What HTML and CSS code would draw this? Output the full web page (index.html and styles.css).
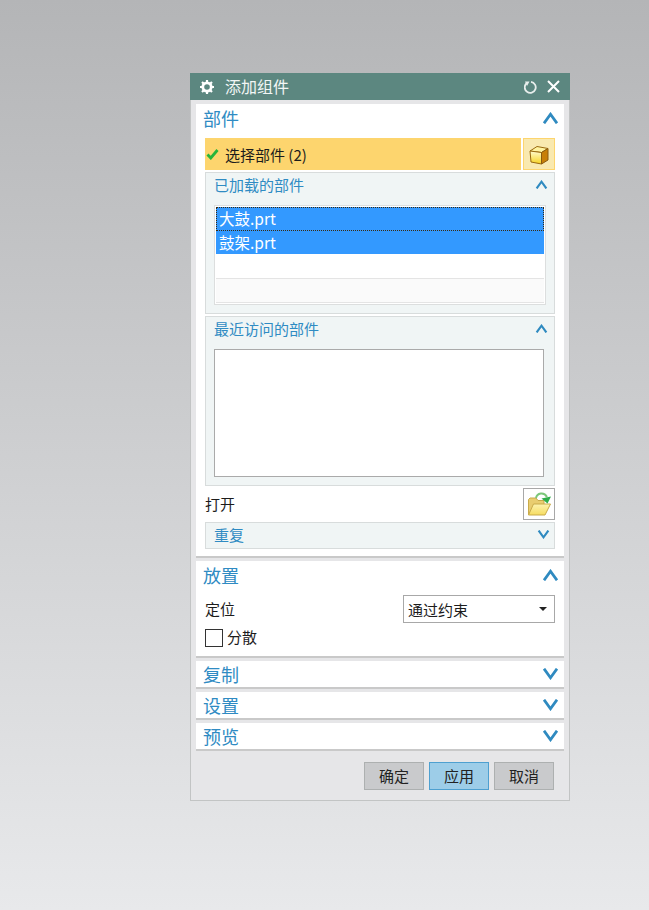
FILE: index.html
```html
<!DOCTYPE html>
<html lang="zh">
<head>
<meta charset="utf-8">
<title>添加组件</title>
<link rel="stylesheet" href="styles.css">
</head>
<body>
<svg width="0" height="0" class="defs">
  <symbol id="up" viewBox="0 0 15 12"><path d="M1 11.300 7.500 2.300 14 11.300" fill="none" stroke="currentColor" stroke-width="2.800"/></symbol>
  <symbol id="down" viewBox="0 0 15 12"><path d="M1 .7 7.500 9.700 14 .7" fill="none" stroke="currentColor" stroke-width="2.800"/></symbol>
</svg>
<main class="dialog">
  <header class="titlebar">
    <svg class="gear" width="16" height="16" viewBox="0 0 16 16"><circle cx="8" cy="8" r="4.200" fill="none" stroke="#fff" stroke-width="2.800"/><path d="M8 1v2.500M8 12.500V15M1 8h2.500M12.500 8H15M3 3l1.800 1.800M11.200 11.200 13 13M3 13l1.800-1.800M11.200 4.800 13 3" stroke="#fff" stroke-width="2.200"/></svg>
    <span class="dialog-title">添加组件</span>
    <svg class="reset" width="14" height="14" viewBox="0 0 14 14"><path d="M2.600 3.200A5.500 5.500 0 1 0 7 1.900" fill="none" stroke="#e8eeec" stroke-width="1.800"/><path d="M1 1.500 5.500 1.500 3 6z" fill="#e8eeec"/></svg>
    <svg class="close" width="13" height="13" viewBox="0 0 13 13"><path d="M1 1 12 12M12 1 1 12" stroke="#fff" stroke-width="2"/></svg>
  </header>
  <div class="body">
    <section class="section first">
      <div class="section-head"><h2>部件</h2><svg class="chev"><use href="#up"/></svg></div>
      <div class="select-row">
        <div class="select-bar">
          <svg class="check" width="13" height="12" viewBox="0 0 13 12"><path d="M1.500 6.500 4.800 10 11.500 2" fill="none" stroke="#27b53a" stroke-width="2.800"/></svg>
          <span>选择部件 (2)</span>
        </div>
        <button class="icon-btn yellow" type="button">
          <svg class="cube" width="20" height="20" viewBox="0 0 20 20">
            <defs><linearGradient id="cubeF" x1="0" y1="0" x2="0" y2="1"><stop offset="0" stop-color="#fffbd0"/><stop offset="1" stop-color="#f7d21e"/></linearGradient></defs>
            <path d="M1 6 8 1.500 19 3.500 12.500 7.500z" fill="#fff3a0" stroke="#9a6a10"/>
            <path d="M1 6 12.500 7.500V19L2 17z" fill="url(#cubeF)" stroke="#9a6a10"/>
            <path d="M12.500 7.500 19 3.500V15L12.500 19z" fill="#c87f08" stroke="#8a5a10"/>
          </svg>
        </button>
      </div>
      <div class="subpanel loaded">
        <div class="sub-head"><h3>已加载的部件</h3><svg class="chev small"><use href="#up"/></svg></div>
        <div class="loaded-list">
          <div class="item focused">大鼓.prt</div>
          <div class="item">鼓架.prt</div>
          <div class="blank"></div>
          <div class="blank grey"></div>
        </div>
      </div>
      <div class="subpanel recent">
        <div class="sub-head"><h3>最近访问的部件</h3><svg class="chev small"><use href="#up"/></svg></div>
        <div class="recent-list"></div>
      </div>
      <div class="open-row">
        <span>打开</span>
        <button class="icon-btn plain" type="button">
          <svg width="26" height="26" viewBox="0 0 26 26">
            <defs><linearGradient id="fold" x1="0" y1="0" x2="0" y2="1"><stop offset="0" stop-color="#fdf3b0"/><stop offset="1" stop-color="#f6dc60"/></linearGradient></defs>
            <path d="M2.500 24V8.500L4 7H10l2 2.500h6V13" fill="#e9cd70" stroke="#c9ab4a"/>
            <path d="M2.500 24 7.500 13H24.500L19 24z" fill="url(#fold)" stroke="#c9ab4a"/>
            <path d="M10 7C11 2 18 .5 21 6" fill="none" stroke="#7cc77a" stroke-width="2"/>
            <path d="M15.500 7.500 25 5.500 21.500 12.500z" fill="#2fae4a"/>
          </svg>
        </button>
      </div>
      <div class="subpanel repeat">
        <h3>重复</h3><svg class="chev small"><use href="#down"/></svg>
      </div>
    </section>
    <section class="section placement">
      <div class="section-head"><h2>放置</h2><svg class="chev"><use href="#up"/></svg></div>
      <div class="position-row">
        <span>定位</span>
        <div class="dropdown"><span>通过约束</span><i class="caret"></i></div>
      </div>
      <label class="scatter"><i class="box"></i><span>分散</span></label>
    </section>
    <section class="section collapsed"><h2>复制</h2><svg class="chev"><use href="#down"/></svg></section>
    <section class="section collapsed"><h2>设置</h2><svg class="chev"><use href="#down"/></svg></section>
    <section class="section collapsed"><h2>预览</h2><svg class="chev"><use href="#down"/></svg></section>
    <footer class="actions">
      <button class="action" type="button">确定</button>
      <button class="action primary" type="button">应用</button>
      <button class="action" type="button">取消</button>
    </footer>
  </div>
</main>
</body>
</html>
```
FILE: styles.css
```css
* { box-sizing: border-box; }
html, body { margin: 0; height: 100%; }
body {
  height: 910px;
  overflow: hidden;
  padding: 73px 0 0 190px;
  background: linear-gradient(#b4b5b7, #e8e9eb);
  font-family: "Noto Sans CJK SC", "Liberation Sans", sans-serif;
  color: #1c1c1c;
}
.defs { position: absolute; }
h2, h3 { margin: 0; font-weight: 400; color: #2f8bc3; }
h2 { font-size: 18px; line-height: 24px; }
h3 { font-size: 15px; line-height: 20px; }
.dialog {
  width: 380px;
  height: 728px;
  background: #e6e6e8;
  border: 1px solid #c2c4c4;
  border-top: 0;
}
.titlebar {
  height: 27px;
  margin: 0 -1px;
  background: #5c8780;
  display: flex;
  align-items: center;
  padding: 0 10px 0 9px;
  color: #f2f6f5;
}
.dialog-title { font-size: 16px; margin: -1px 0 0 10px; flex: 1; }
.reset { margin-left: 1px; }
.close { margin-left: 9px; }
.body { padding: 4px 5px 0; }
.section {
  width: 368px;
  background: #fff;
  border-bottom: 2px solid #c9c9c9;
  margin-bottom: 3px;
}
.section.first { height: 454px; padding: 0 9px; }
.section-head {
  height: 34px;
  display: flex;
  align-items: center;
  justify-content: space-between;
  margin-left: -2px;
}
.section-head h2 { margin-top: -6px; }
.section-head .chev { margin: -6px -3px 0 0; }
.chev { width: 15px; height: 12px; color: #2f8ac0; flex: none; }
.chev.small { width: 13px; height: 9px; }
.select-row { display: flex; gap: 2px; height: 32px; }
.select-bar {
  flex: 1;
  background: #fdd56e;
  display: flex;
  align-items: center;
  padding-left: 1px;
  font-size: 15px;
}
.check { margin-right: 6px; }
.icon-btn {
  width: 32px;
  height: 32px;
  padding: 0;
  display: flex;
  align-items: center;
  justify-content: center;
}
.cube { margin-top: 2px; }
.yellow { background: #f9e9b0; border: 1px solid #fdd56e; }
.plain { background: #fff; border: 1px solid #a8a8a8; }
.subpanel {
  background: #f0f5f5;
  border: 1px solid #d8dcdc;
}
.loaded { height: 142px; margin-top: 2px; padding: 0 8px; }
.recent { height: 170px; margin-top: 2px; padding: 0 8px; }
.sub-head {
  height: 24px;
  display: flex;
  align-items: center;
  justify-content: space-between;
}
.sub-head h3 { margin-top: -1px; }
.sub-head .chev { margin: -1px -2px 0 0; }
.loaded-list {
  width: 332px;
  height: 100px;
  margin-top: 8px;
  border: 1px solid #dcdede;
  padding: 1px;
  background: #fff;
}
.item {
  height: 23.500px;
  background: #3399ff;
  color: #fff;
  font-size: 15.500px;
  line-height: 23px;
  padding-left: 3px;
}
.item.focused { outline: 1px dotted #3a2a10; outline-offset: -1px; }
.blank { height: 24px; background: #fff; border-bottom: 1px solid #e4e4e4; }
.blank:nth-child(3) { height: 25px; }
.blank.grey { background: #fafafa; }
.recent-list {
  width: 330px;
  height: 128px;
  margin-top: 8px;
  background: #fff;
  border: 1px solid #aaa;
}
.open-row {
  height: 32px;
  margin-top: 2px;
  display: flex;
  align-items: center;
  justify-content: space-between;
  font-size: 15px;
}
.open-row > span { margin-top: -2px; }
.repeat {
  height: 27px;
  margin-top: 2px;
  display: flex;
  align-items: center;
  justify-content: space-between;
  padding: 0 4px 3px 8px;
}
.repeat h3 { margin-top: 1px; }
.placement { height: 97px; padding: 0 9px; }
.position-row {
  display: flex;
  justify-content: space-between;
  align-items: center;
  height: 28px;
  font-size: 15px;
}
.position-row > span { margin-top: -2px; }
.dropdown {
  width: 152px;
  height: 28px;
  border: 1px solid #a8a8a8;
  display: flex;
  align-items: center;
  justify-content: space-between;
  padding: 0 7px 0 4px;
}
.caret {
  width: 0;
  height: 0;
  border: 4px solid transparent;
  border-top-color: #222;
  border-bottom: 0;
}
.scatter { display: flex; align-items: center; gap: 4px; font-size: 15px; margin-top: 5px; }
.scatter span { margin-top: -2px; }
.box { width: 18px; height: 18px; border: 1px solid #333; background: #fff; }
.collapsed {
  height: 28px;
  display: flex;
  align-items: center;
  justify-content: space-between;
  padding: 0 6px 0 7px;
}
.actions {
  display: flex;
  justify-content: flex-end;
  gap: 5px;
  padding: 8px 10px 0 0;
}
.action {
  width: 60px;
  height: 28px;
  background: #c9cacc;
  border: 1px solid #adb0b0;
  font: 15px "Noto Sans CJK SC", "Liberation Sans", sans-serif;
  color: #222;
  padding: 0 0 2px;
}
.primary { background: #9dcde8; border-color: #4ea0d0; }
```
